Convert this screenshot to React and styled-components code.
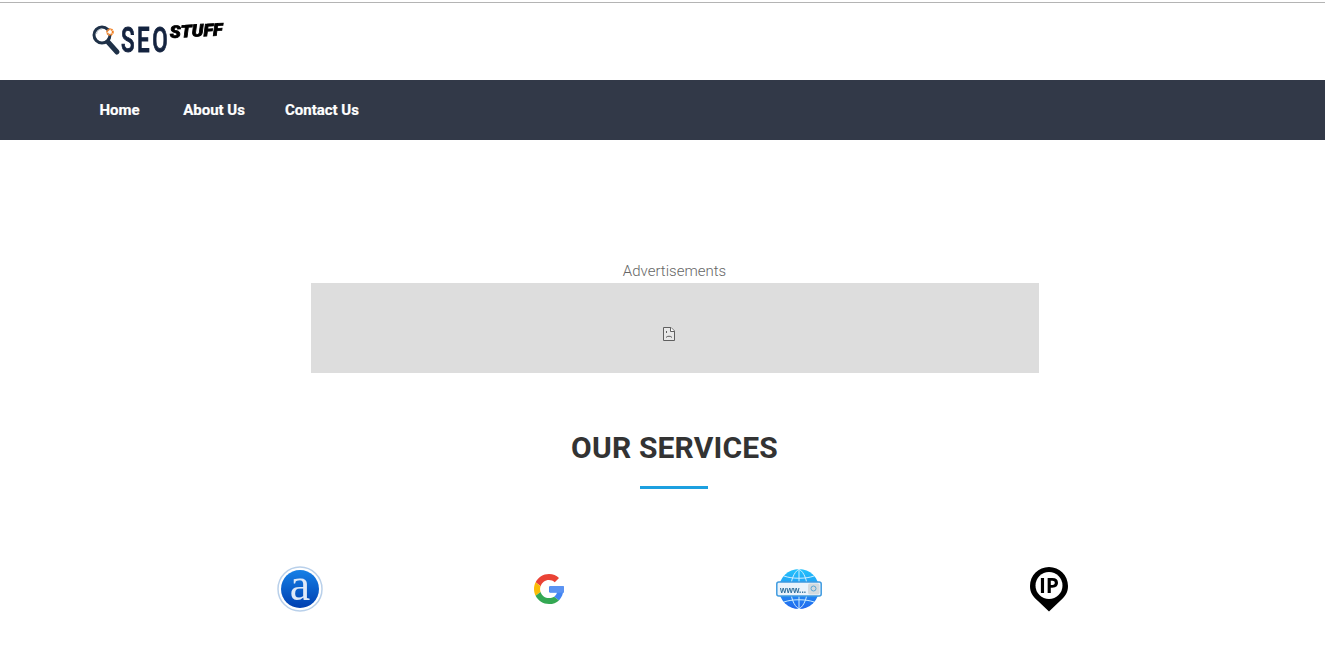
import React from 'react';
import styled, { createGlobalStyle } from 'styled-components';

const GlobalStyle = createGlobalStyle`
    html, body {
        margin: 0;
        padding: 0;
        background: #fff;
        overflow: hidden;
        font-family: Roboto, "Liberation Sans", sans-serif;
    }
`

const Page = styled.div`
    width: 1349px;
    height: 657px;
    overflow: hidden;
    display: flex;
    flex-direction: column;
`

const Header = styled.header`
    height: 80px;
    box-sizing: border-box;
    padding: 2px 0 0 92px;
`

const TopRule = styled.div`
    position: absolute;
    top: 2px;
    left: 0;
    right: 0;
    height: 1px;
    background: #b4b4b4;
`

const Logo = styled.a`
    display: block;
    width: 134px;
    height: 50px;
    margin-top: 16px;
    svg {
        display: block;
        filter: blur(0.3px);
    }
`

const Nav = styled.nav`
    height: 60px;
    background: #323948;
    display: flex;
    align-items: center;
    padding-left: 99.5px;
    a {
        color: #fff;
        font-size: 15px;
        font-weight: 700;
        text-decoration: none;
        -webkit-text-stroke: 0.2px #fff;
        margin-right: 43.5px;
    }
    a + a {
        margin-right: 40px;
    }
`

const AdSection = styled.section`
    margin-top: 122px;
    display: flex;
    flex-direction: column;
    align-items: center;
`

const AdLabel = styled.div`
    font-size: 15px;
    font-weight: 300;
    line-height: 18px;
    color: #666;
`

const AdBox = styled.div`
    width: 728px;
    height: 90px;
    margin-top: 3px;
    background: #ddd;
    display: flex;
    justify-content: center;
    padding-top: 43px;
    box-sizing: border-box;
    svg {
        margin-right: 12px;
    }
`

const Heading = styled.h2`
    margin: 56px 0 0;
    text-align: center;
    font-size: 30px;
    letter-spacing: 0.17px;
    line-height: 38px;
    font-weight: 700;
    color: #333;
`

const Underline = styled.div`
    width: 68px;
    height: 3px;
    margin: 19px 0 0 640px;
    background: #1ca0e0;
`

const Services = styled.div`
    margin: 77px 0 0 174px;
    display: grid;
    grid-template-columns: repeat(4, 250px);
`

const Service = styled.div`
    height: 46px;
    display: flex;
    justify-content: center;
    align-items: center;
    svg {
        display: block;
        overflow: visible;
        filter: blur(0.35px);
    }
`

const LogoMark = () => (
    <svg width="134" height="50" viewBox="0 0 134 50">
        <circle cx="10" cy="17" r="8" fill="none" stroke="#1f3148" strokeWidth="3" />
        <path d="M4.500 16 C5 12.500 7.500 11 10 11" fill="none" stroke="#b8c2cc" strokeWidth="1" />
        <path d="M16 24 L25 34" stroke="#1f3148" strokeWidth="5" strokeLinecap="round" />
        <circle cx="18" cy="14" r="2.800" fill="#fff" stroke="#f07f22" strokeWidth="2" strokeDasharray="1.500 0.500" />
        <text transform="translate(29 33.500) scale(0.64 1)" fontFamily="Roboto, sans-serif" fontSize="35" fontWeight="500" letterSpacing="4" fill="#14233f" stroke="#14233f" strokeWidth="0.9">SEO</text>
        <text x="78" y="20" fontFamily="Roboto, sans-serif" fontSize="17" fontWeight="900" fontStyle="italic" fill="#000" stroke="#000" strokeWidth="0.8" textLength="53" lengthAdjust="spacingAndGlyphs" transform="rotate(-3 78 20)">STUFF</text>
    </svg>
)

const BrokenImage = () => (
    <svg width="14" height="16" viewBox="0 0 14 16">
        <path d="M1.500 1.500 H9 L12.500 5 V14.500 H1.500 Z" fill="#e8e8e8" stroke="#5f5f5f" />
        <path d="M8.500 1.500 V5.500 H12.500" fill="#fff" stroke="#5f5f5f" />
        <path d="M4.500 5 V7 M4 11.500 C5 9.800 9 9.800 10 11.500" fill="none" stroke="#5f5f5f" />
    </svg>
)

const AlexaIcon = () => (
    <svg width="45" height="46" viewBox="0 0 45 46">
        <defs>
            <linearGradient id="alexa" x1="0" y1="0" x2="0" y2="1">
                <stop offset="0" stopColor="#1680e6" />
                <stop offset="1" stopColor="#003fb0" />
            </linearGradient>
        </defs>
        <circle cx="23" cy="23" r="22" fill="#fff" stroke="#b9d0ea" strokeWidth="1.500" />
        <circle cx="23" cy="23" r="19" fill="url(#alexa)" />
        <text x="23" y="33.500" textAnchor="middle" fontFamily="Liberation Serif, serif" fontSize="46" fill="#dfe9f7">a</text>
    </svg>
)

const GoogleIcon = () => (
    <svg width="30" height="30" viewBox="0 0 48 48">
        <path fill="#ea4335" d="M24 9.500c3.500 0 6.700 1.200 9.200 3.600l6.800-6.800C35.900 2.400 30.500 0 24 0 14.600 0 6.500 5.400 2.600 13.200l8 6.200C12.400 13.700 17.700 9.500 24 9.500z" />
        <path fill="#4285f4" d="M47 24.500c0-1.600-.1-3.100-.4-4.500H24v9h12.900c-.6 3-2.200 5.500-4.700 7.200l7.700 6C44.400 38 47 31.800 47 24.500z" />
        <path fill="#fbbc05" d="M10.500 28.600c-.5-1.400-.8-3-.8-4.600s.3-3.200.8-4.600l-8-6.200C.9 16.500 0 20.100 0 24s.9 7.500 2.600 10.800l7.900-6.200z" />
        <path fill="#34a853" d="M24 48c6.500 0 11.900-2.100 15.900-5.800l-7.700-6c-2.100 1.400-4.900 2.300-8.200 2.300-6.300 0-11.600-4.200-13.500-9.900l-8 6.200C6.500 42.600 14.600 48 24 48z" />
        <rect x="25" y="19" width="23" height="11" rx="1" fill="#5b93f2" />
    </svg>
)

const WebIcon = () => (
    <svg width="46" height="42" viewBox="0 0 46 42">
        <defs>
            <linearGradient id="globe" x1="0" y1="0" x2="0" y2="1">
                <stop offset="0" stopColor="#22c3fb" />
                <stop offset="1" stopColor="#2268ee" />
            </linearGradient>
        </defs>
        <circle cx="23" cy="21" r="20" fill="url(#globe)" />
        <path d="M23 1 V41 M8 8 C16 11 30 11 38 8 M8 34 C16 31 30 31 38 34 M23 1 C12 8 12 34 23 41 M23 1 C34 8 34 34 23 41" fill="none" stroke="#cfeeff" strokeWidth="1" />
        <rect x="0.800" y="14" width="44.400" height="14" rx="2" fill="#eaf3fb" stroke="#3f9be0" strokeWidth="1.500" />
        <text x="4" y="24.500" fontFamily="Liberation Sans, sans-serif" fontSize="9" fontWeight="700" fill="#2f6f9c" textLength="26" lengthAdjust="spacingAndGlyphs">www...</text>
        <rect x="32" y="15.500" width="11.500" height="11" rx="2" fill="#d3dade" />
        <circle cx="37.500" cy="20.500" r="2.500" fill="none" stroke="#5aa6d6" strokeWidth="1" />
    </svg>
)

const IpIcon = () => (
    <svg width="40" height="46" viewBox="0 0 40 46">
        <path d="M20 45.500 L9 35 C3.500 30.500 1 26 1 20 C1 9.500 9.500 1 20 1 C30.500 1 39 9.500 39 20 C39 26 36.500 30.500 31 35 Z" fill="#000" />
        <circle cx="20" cy="19.500" r="13.500" fill="#fff" />
        <text x="20" y="27" textAnchor="middle" fontFamily="Open Sans, sans-serif" fontSize="21" fontWeight="700" fill="#000">IP</text>
    </svg>
)

export default function App() {
    return (
        <Page>
            <GlobalStyle />
            <TopRule />
            <Header>
                <Logo href="#"><LogoMark /></Logo>
            </Header>
            <Nav>
                <a href="#">Home</a>
                <a href="#">About Us</a>
                <a href="#">Contact Us</a>
            </Nav>
            <AdSection>
                <AdLabel>Advertisements</AdLabel>
                <AdBox><BrokenImage /></AdBox>
            </AdSection>
            <Heading>OUR SERVICES</Heading>
            <Underline />
            <Services>
                <Service><AlexaIcon /></Service>
                <Service><GoogleIcon /></Service>
                <Service><WebIcon /></Service>
                <Service><IpIcon /></Service>
            </Services>
        </Page>
    );
}
